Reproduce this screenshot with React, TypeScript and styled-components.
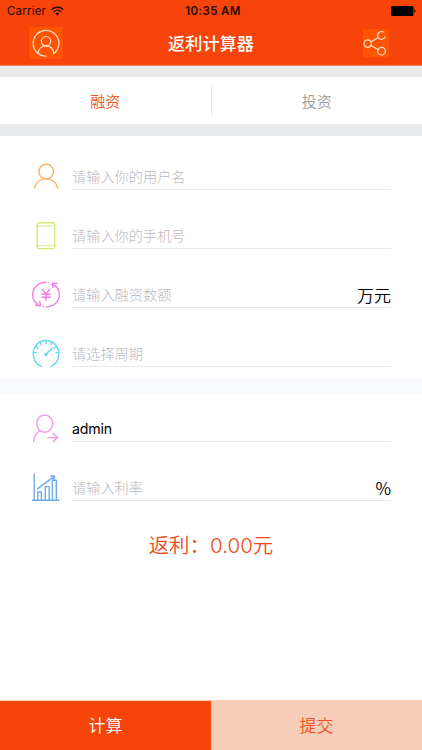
import React from "react";
import styled, { createGlobalStyle } from "styled-components";

const GlobalStyle = createGlobalStyle`
  * { box-sizing: border-box; }
  body { margin: 0; background: #fff; }
`;

const Screen = styled.div`
  width: 422px;
  height: 750px;
  display: flex;
  flex-direction: column;
  overflow: hidden;
  background: #fff;
  color: #000;
  font-family: Inter, "Noto Sans CJK SC", sans-serif;
`;

const Header = styled.header`
  height: 66px;
  flex: none;
  background: #f7440a;
  border-bottom: 1px solid #f0835f;
`;

const StatusBar = styled.div`
  height: 22px;
  padding: 0 6px 0 7px;
  display: grid;
  grid-template-columns: 1fr auto 1fr;
  align-items: center;
  font-size: 11.5px;
  line-height: 22px;
  color: #260a02;
`;

const Carrier = styled.div`
  display: flex;
  align-items: center;
  gap: 5px;
  letter-spacing: 0.2px;
`;

const Clock = styled.div`
  margin-left: 3px;
  font-weight: 600;
  letter-spacing: 0.4px;
`;

const Battery = styled.svg`
  justify-self: end;
  display: block;
`;

const NavBar = styled.nav`
  height: 42px;
  padding: 0 33px 0 29px;
  display: grid;
  grid-template-columns: 1fr auto 1fr;
  align-items: center;
`;

const NavButton = styled.div<{ $w: number; $h: number; $end?: boolean }>`
  width: ${(p) => p.$w}px;
  height: ${(p) => p.$h}px;
  justify-self: ${(p) => (p.$end ? "end" : "start")};
  background: #ff5403;
  svg { display: block; }
`;

const Title = styled.h1`
  margin: 1px 0 0 4px;
  font-size: 17.2px;
  line-height: 26px;
  font-weight: 500;
  color: #fff;
`;

const Divider = styled.div<{ $h: number; $color: string }>`
  height: ${(p) => p.$h}px;
  flex: none;
  background: ${(p) => p.$color};
`;

const Tabs = styled.div`
  height: 47px;
  flex: none;
  display: flex;
  align-items: center;
`;

const Tab = styled.div<{ $active?: boolean }>`
  flex: 1;
  height: 32px;
  line-height: 33px;
  text-align: center;
  font-size: 15px;
  font-weight: 350;
  color: ${(p) => (p.$active ? "#f0521f" : "#9b9b9b")};
  & + & { border-left: 1px solid #e9e9e9; }
`;

const Fields = styled.section<{ $top: number; $bottom?: number }>`
  flex: none;
  display: grid;
  gap: 31px;
  padding: ${(p) => p.$top}px 31px ${(p) => p.$bottom ?? 0}px 32px;
`;

const Row = styled.div`
  height: 28px;
  display: flex;
  gap: 12px;
`;

const Icon = styled.svg<{ $color: string }>`
  width: 28px;
  height: 28px;
  flex: none;
  overflow: visible;
  fill: none;
  stroke: ${(p) => p.$color};
  stroke-width: 1.4;
  stroke-linecap: round;
  stroke-linejoin: round;
`;

const Field = styled.div`
  flex: 1;
  display: flex;
  justify-content: space-between;
  border-bottom: 1px solid #e8e8ea;
  line-height: 30px;
`;

const Value = styled.span<{ $filled?: boolean }>`
  font-size: 14.2px;
  font-weight: ${(p) => (p.$filled ? 400 : 300)};
  letter-spacing: ${(p) => (p.$filled ? "-0.2px" : "0")};
  color: ${(p) => (p.$filled ? "#000" : "#b9b9c2")};
`;

const Unit = styled.span`
  font-family: "Noto Sans CJK SC", sans-serif;
  font-size: 17px;
  font-weight: 350;
`;

const Result = styled.div`
  margin-top: 30px;
  text-align: center;
  font-size: 20.5px;
  line-height: 30px;
  font-weight: 350;
  color: #ee4a18;
`;

const Footer = styled.footer`
  margin-top: auto;
  height: 50px;
  flex: none;
  display: flex;
  border-top: 1px solid #f6cdb8;
`;

const Action = styled.div<{ $primary?: boolean }>`
  flex: 1;
  line-height: 51px;
  text-align: center;
  font-size: 17px;
  font-weight: 350;
  background: ${(p) => (p.$primary ? "#f7440a" : "#f6cdb8")};
  color: ${(p) => (p.$primary ? "#fff" : "#ec4f20")};
`;

const WifiIcon = () => (
  <svg width="13" height="10" viewBox="0 0 13 10" fill="none" stroke="#260a02">
    <path d="M.8 3.5a8.4 8.4 0 0 1 11.4 0" strokeWidth="1.6" />
    <path d="M2.9 5.8a5.2 5.2 0 0 1 7.2 0" strokeWidth="1.5" />
    <path d="M6.5 9.4 4.6 7.5a2.8 2.8 0 0 1 3.8 0z" fill="#260a02" stroke="none" />
  </svg>
);

const ProfileIcon = () => (
  <svg width="34" height="32" viewBox="0 0 34 32" fill="none" stroke="#ffe3cd" strokeWidth="1.2" strokeLinecap="round">
    <path d="M17 29.2A12.9 12.9 0 1 1 24.8 26.6" />
    <circle cx="17" cy="14.2" r="4.7" />
    <path d="M9 26.2c.5-4.500 3.800-7.300 8-7.300s7.300 2.800 7.800 7.700" />
  </svg>
);

const ShareIcon = () => (
  <svg width="26" height="28" viewBox="0 0 26 28" fill="none" stroke="#ffe3cd" strokeWidth="1.2" strokeLinecap="round">
    <circle cx="4.7" cy="14.6" r="3.7" />
    <path d="M20.8 3.3a3.9 3.9 0 1 0 1.3 4.5M8 12.8l7.4-4.200M8 16.500l7.300 4.200" />
    <circle cx="18.5" cy="22.2" r="3.8" />
  </svg>
);

const UserIcon = () => (
  <Icon $color="#f9b460" viewBox="0 0 28 28">
    <circle cx="14.2" cy="9.6" r="7.3" />
    <path d="M2.3 26.1C3.8 20.4 8.5 16.9 14.1 16.9s10.3 3.5 11.7 9.2" />
  </Icon>
);

const PhoneIcon = () => (
  <Icon $color="#cfee74" viewBox="0 0 28 28">
    <rect x="5.2" y="1.8" width="17.4" height="25.8" rx="1.6" />
    <path d="M5.2 5h17.4M5.2 24.8h17.4" strokeWidth="1.1" />
  </Icon>
);

const YuanIcon = () => (
  <Icon $color="#f67ce8" viewBox="0 0 28 28">
    <path d="M14 2.3C6.500 2.300.6 7.900.6 14.700c0 4 2 7.600 5.300 9.900M3.500 25.300l4.900.8-.6-4.400" />
    <path d="M14.200 26.900c7.500 0 13.200-5.600 13.200-12.300 0-4.200-2.300-7.800-5.700-10M25.200 3.400l-5-.2.800 4.300M16.200 2.600h.3M11.200 26.700h.3" />
    <path d="m10.300 9.300 3.700 4.800 3.700-4.800M14 14.300v6.100M9.900 14.300h8.200M9.900 17.200h8.200" strokeWidth="1.500" />
  </Icon>
);

const GaugeIcon = () => (
  <Icon $color="#5cd9f3" viewBox="0 0 28 28">
    <path d="M9.200 27.300C4.400 25.500 1.300 20.700 1.300 14.800 1.300 7.200 7 1.500 14 1.500s12.800 5.700 12.800 13.300c0 5.900-3.200 10.700-7.900 12.500" />
    <path d="M14 1.700v3M8.200 3.500l1 2.200M3.900 7.900l2 1.200M1.500 13.600h2.600M19.800 3.500l-1 2.200M24.100 7.900l-2 1.200M26.600 13.600h-2.600" />
    <path d="m14.600 14.800 5.200-5.400" strokeWidth="1.500" />
    <circle cx="14" cy="15.500" r="1" fill="#5cd9f3" />
  </Icon>
);

const ReferrerIcon = () => (
  <Icon $color="#f595e8" viewBox="0 0 28 28">
    <ellipse cx="12.700" cy="9.600" rx="7.900" ry="8.600" />
    <path d="M1.700 27.500c.2-5.200 2.300-8.400 5.800-10.500M15.700 23.600h9.800M20.900 19.300l4.700 4.300-4.700 4.400" />
  </Icon>
);

const ChartIcon = () => (
  <Icon $color="#6dacec" viewBox="0 0 28 28">
    <path d="M2.200 1.300v26.200M.6 27.200h26.400" />
    <path d="M5.700 27v-8h3.700v8M13.300 27V13.600h3.900V27M20.400 27V7.300h3.900V27" />
    <path d="M5.700 15.700 22.100 3.600M18.800 3.100l3.700.2-.7 3.600" strokeWidth="1.500" />
  </Icon>
);

interface FormRowProps {
  icon: React.ReactNode;
  text: string;
  filled?: boolean;
  unit?: string;
}

const FormRow = ({ icon, text, filled, unit }: FormRowProps) => (
  <Row>
    {icon}
    <Field>
      <Value $filled={filled}>{text}</Value>
      {unit && <Unit>{unit}</Unit>}
    </Field>
  </Row>
);

export default function App() {
  return (
    <Screen>
      <GlobalStyle />
      <Header>
        <StatusBar>
          <Carrier>
            Carrier
            <WifiIcon />
          </Carrier>
          <Clock>10:35 AM</Clock>
          <Battery width="25" height="10" viewBox="0 0 25 10">
            <rect width="22.500" height="10" rx="1.500" />
            <path d="M23.300 3.200c1.600.5 1.600 3.100 0 3.600z" />
          </Battery>
        </StatusBar>
        <NavBar>
          <NavButton $w={34} $h={32}>
            <ProfileIcon />
          </NavButton>
          <Title>返利计算器</Title>
          <NavButton $w={26} $h={28} $end>
            <ShareIcon />
          </NavButton>
        </NavBar>
      </Header>
      <Divider $h={11} $color="#e9eaeb" />
      <Tabs>
        <Tab $active>融资</Tab>
        <Tab>投资</Tab>
      </Tabs>
      <Divider $h={12} $color="#e9eaeb" />
      <Fields $top={26} $bottom={11}>
        <FormRow icon={<UserIcon />} text="请输入你的用户名" />
        <FormRow icon={<PhoneIcon />} text="请输入你的手机号" />
        <FormRow icon={<YuanIcon />} text="请输入融资数额" unit="万元" />
        <FormRow icon={<GaugeIcon />} text="请选择周期" />
      </Fields>
      <Divider $h={16} $color="#f9fafd" />
      <Fields $top={20}>
        <FormRow icon={<ReferrerIcon />} text="admin" filled />
        <FormRow icon={<ChartIcon />} text="请输入利率" unit="%" />
      </Fields>
      <Result>返利：0.00元</Result>
      <Footer>
        <Action $primary>计算</Action>
        <Action>提交</Action>
      </Footer>
    </Screen>
  );
}
